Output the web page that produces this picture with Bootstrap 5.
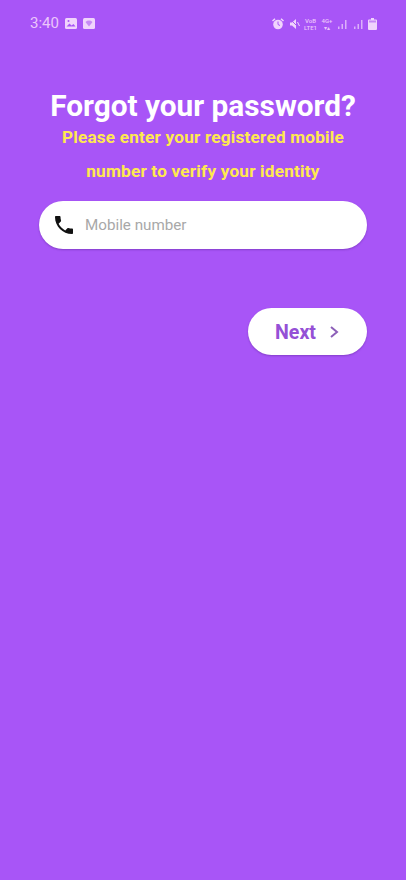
<!DOCTYPE html>
<html lang="en">
<head>
<meta charset="utf-8">
<title>Forgot your password</title>
<link rel="stylesheet" href="https://cdn.jsdelivr.net/npm/bootstrap@5.3.0/dist/css/bootstrap.min.css">
<style>
html,body{height:100%;}
body{background:#a855f7;font-family:Roboto,"Liberation Sans",sans-serif;overflow:hidden;}
.phone-status{height:47px;padding:0 29px 0 30px;color:#ecc6fb;font-size:15px;}
.phone-status svg{display:block;flex-shrink:0;}
.status-gap{gap:6px;}
.status-right{gap:4.5px;}
.net-label{font-size:6px;line-height:7px;font-weight:500;text-align:center;white-space:nowrap;}
.net-a{width:13px;}
.net-b{width:11px;}
.auth-wrap{padding:0 39px;}
.auth-title{font-size:29.8px;line-height:34px;font-weight:700;color:#fff;margin:0;margin-top:42px;white-space:nowrap;}
.auth-sub{font-size:17.2px;letter-spacing:.2px;line-height:34px;font-weight:700;color:#ffe94f;margin:0;margin-top:-3px;white-space:nowrap;}
.phone-field{height:48px;border-radius:24px;background:#fff;margin-top:13px;padding-left:13px;box-shadow:0 1px 2px rgba(70,20,120,.35);gap:9px;}
.phone-field input{border:0;outline:0;background:transparent;font-size:15.2px;color:#333;padding:1px 0 0;width:100%;font-family:inherit;}
.phone-field input::placeholder{color:#a8a8a8;opacity:1;}
.next-btn{width:119px;height:47px;border-radius:24px;background:#fff;border:0;color:#9550d6;font-size:19.6px;font-weight:700;margin-top:59px;gap:13px;padding:3px 1px 0 0;box-shadow:0 1px 2px rgba(70,20,120,.35);}
.next-btn svg{margin-top:-2px;}
.next-btn:hover,.next-btn:active{background:#fff!important;color:#9550d6!important;}
</style>
</head>
<body>
<div class="phone-status d-flex align-items-center justify-content-between">
  <div class="d-flex align-items-center status-gap">
    <span>3:40</span>
    <svg width="12" height="11" viewBox="0 0 12 11"><rect width="12" height="11" rx="1.5" fill="#f0d4fc"/><path d="M1.500 8.500l3-3 2 2 2-1.500 2 2.500z" fill="#a855f7"/><circle cx="3.500" cy="3" r="1" fill="#a855f7"/></svg>
    <svg width="12" height="11" viewBox="0 0 12 11"><rect width="12" height="11" rx="1.500" fill="#f0d4fc"/><path d="M2.500 4a5 5 0 0 1 7 0L6 8.500z" fill="#c68af5"/></svg>
  </div>
  <div class="d-flex align-items-center status-right">
    <svg width="12" height="12" viewBox="0 0 12 12"><circle cx="6" cy="6.500" r="4.800" fill="#f0d4fc"/><path d="M6 3.500v3l2 1" stroke="#a855f7" fill="none"/><path d="M.5 3L3 .8M11.500 3L9 .8" stroke="#f0d4fc" stroke-width="1.500"/></svg>
    <svg width="11" height="12" viewBox="0 0 11 12"><path d="M1 4.500h2L7 1v10L3 7.500H1z" fill="#f0d4fc"/><path d="M1 1l10 10" stroke="#a855f7"/><path d="M8.500 4l2 4" stroke="#f0d4fc"/></svg>
    <div class="net-label net-a">VoB<br>LTE1</div>
    <div class="net-label net-b">4G+<br>▾▴</div>
    <svg width="11" height="11" viewBox="0 0 11 11"><path d="M1 8.500h1.500V11H1zM4.500 6H6v5H4.500zM8 2h1.500v9H8z" fill="#dcb0f9"/></svg>
    <svg width="11" height="11" viewBox="0 0 11 11"><path d="M1 8.500h1.500V11H1zM4.500 6H6v5H4.500zM8 2h1.500v9H8z" fill="#dcb0f9"/></svg>
    <svg width="9" height="12" viewBox="0 0 9 12"><path d="M3 0h3v1.500h2a1 1 0 0 1 1 1V11a1 1 0 0 1-1 1H1a1 1 0 0 1-1-1V2.500a1 1 0 0 1 1-1h2z" fill="#f0d4fc"/><rect x="1" y="2.500" width="7" height="2" fill="#c68af5"/></svg>
  </div>
</div>
<main class="auth-wrap">
  <div class="text-center d-flex flex-column align-items-center">
    <h1 class="auth-title">Forgot your password?</h1>
    <p class="auth-sub">Please enter your registered mobile<br>number to verify your identity</p>
  </div>
  <div class="phone-field d-flex align-items-center">
    <svg width="24" height="24" viewBox="0 0 24 24" class="flex-shrink-0"><path fill="#111" d="M6.620 10.790c1.440 2.830 3.760 5.140 6.590 6.590l2.200-2.200c.27-.27.67-.36 1.020-.24 1.120.37 2.330.57 3.570.57.55 0 1 .45 1 1V20c0 .55-.45 1-1 1-9.390 0-17-7.610-17-17 0-.55.45-1 1-1h3.500c.55 0 1 .45 1 1 0 1.250.2 2.450.57 3.570.11.35.03.74-.25 1.020l-2.200 2.200z"/></svg>
    <input type="tel" placeholder="Mobile number" aria-label="Mobile number">
  </div>
  <div class="d-flex justify-content-end">
    <button type="button" class="btn next-btn d-flex align-items-center justify-content-center">
      Next
      <svg width="10" height="12" viewBox="0 0 10 12"><path d="M2 1L8 6 2 11" fill="none" stroke="#8c5fb8" stroke-width="2"/></svg>
    </button>
  </div>
</main>
<script src="https://cdn.jsdelivr.net/npm/bootstrap@5.3.0/dist/js/bootstrap.bundle.min.js"></script>
</body>
</html>
